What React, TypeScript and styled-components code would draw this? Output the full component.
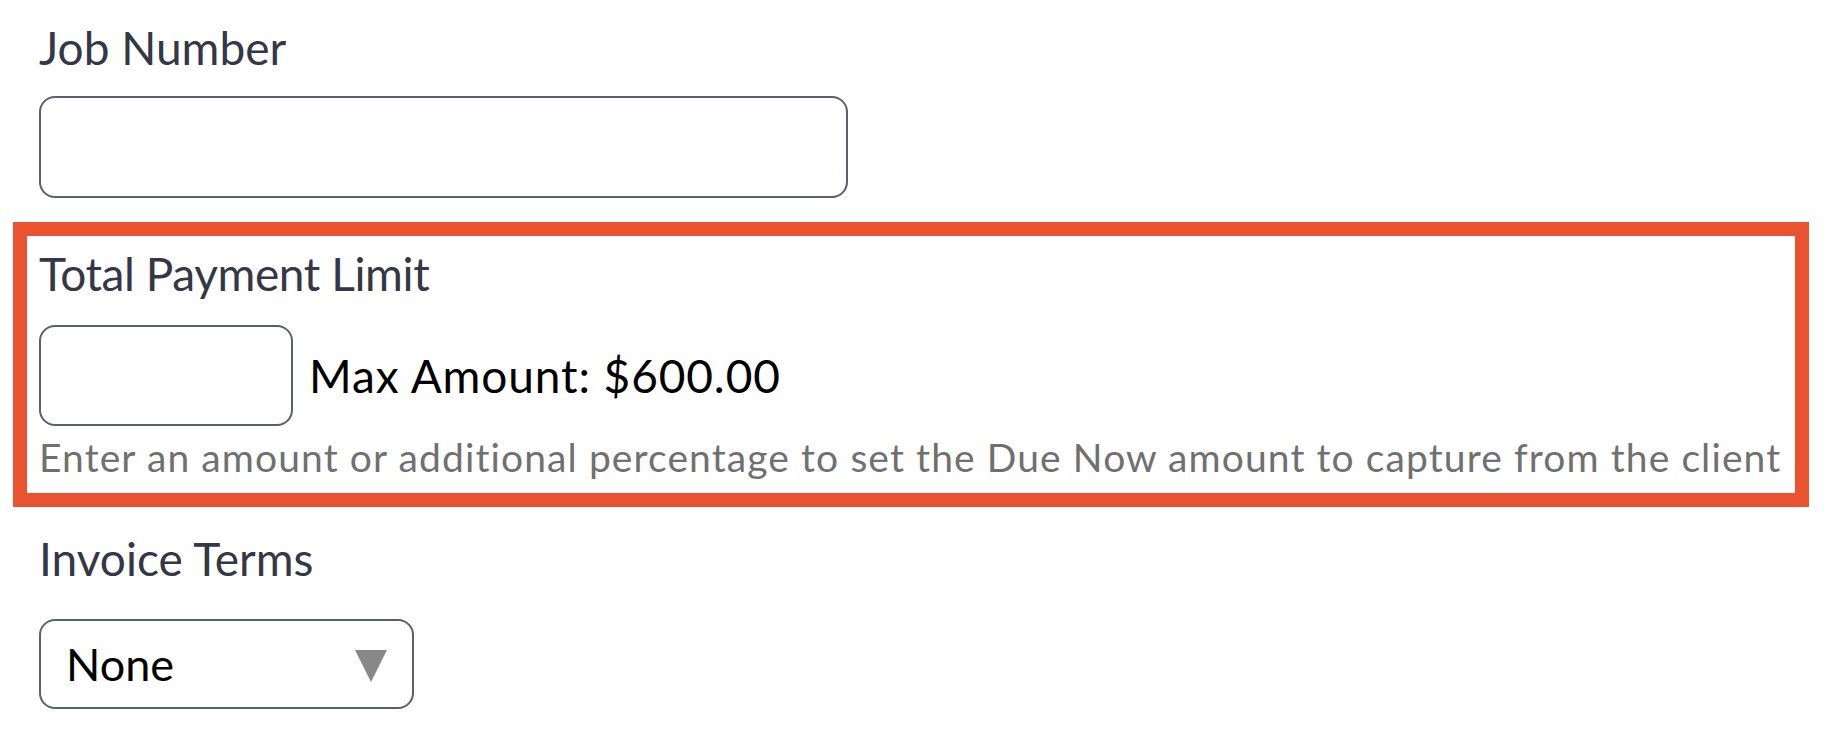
import React from "react";
import styled, { createGlobalStyle } from "styled-components";

const GlobalStyle = createGlobalStyle`
  html, body {
    margin: 0;
    padding: 0;
    background: #ffffff;
  }
  body {
    font-family: Lato, "Noto Sans", sans-serif;
  }
`;

const Page = styled.div`
  display: flex;
  flex-direction: column;
  padding: 20px 0 0 39px;
`;

const Label = styled.div<{ $tight?: boolean }>`
  font-size: 46px;
  line-height: 1.2;
  color: #343745;
  letter-spacing: ${(p) => (p.$tight ? "-0.4px" : "0")};
`;

const TextInput = styled.input<{ $width: number; $height: number }>`
  box-sizing: border-box;
  width: ${(p) => p.$width}px;
  height: ${(p) => p.$height}px;
  border: 2px solid #5b606d;
  border-radius: 16px;
  background: #fff;
  font-family: inherit;
  font-size: 40px;
  padding: 0 16px;
  outline: none;
`;

const Highlight = styled.div`
  box-sizing: border-box;
  width: 1796px;
  margin: 24px 0 0 -26px;
  border: 14px solid #eb5230;
  padding: 10px 12px 12px;
  display: flex;
  flex-direction: column;
`;

const AmountRow = styled.div`
  display: flex;
  align-items: center;
  gap: 16px;
  margin-top: 24px;
`;

const MaxAmount = styled.span`
  font-size: 46px;
  letter-spacing: 0.9px;
  color: #000;
`;

const Hint = styled.div`
  margin-top: 8px;
  font-size: 39px;
  line-height: 1.2;
  letter-spacing: 1.1px;
  color: #707070;
  white-space: nowrap;
`;

const SelectWrap = styled.div`
  position: relative;
  width: 375px;
  height: 90px;
  margin-top: 33px;
`;

const Select = styled.select`
  box-sizing: border-box;
  width: 100%;
  height: 100%;
  appearance: none;
  border: 2px solid #5b606d;
  border-radius: 16px;
  background: #fff;
  font-family: inherit;
  font-size: 45px;
  color: #000;
  padding: 0 0 0 25px;
  outline: none;
`;

const Caret = styled.svg`
  position: absolute;
  top: 31px;
  right: 27px;
  pointer-events: none;
`;

export default function App() {
  return (
    <>
      <GlobalStyle />
      <Page>
        <Label>Job Number</Label>
        <TextInput $width={809} $height={102} style={{ marginTop: 21 }} />

        <Highlight>
          <Label $tight>Total Payment Limit</Label>
          <AmountRow>
            <TextInput $width={254} $height={101} />
            <MaxAmount>Max Amount: $600.00</MaxAmount>
          </AmountRow>
          <Hint>
            Enter an amount or additional percentage to set the Due Now amount
            to capture from the client
          </Hint>
        </Highlight>

        <Label style={{ marginTop: 24 }}>Invoice Terms</Label>
        <SelectWrap>
          <Select defaultValue="none">
            <option value="none">None</option>
          </Select>
          <Caret width="32" height="32" viewBox="0 0 32 32">
            <polygon points="0,0 32,0 16,32" fill="#888888" />
          </Caret>
        </SelectWrap>
      </Page>
    </>
  );
}
